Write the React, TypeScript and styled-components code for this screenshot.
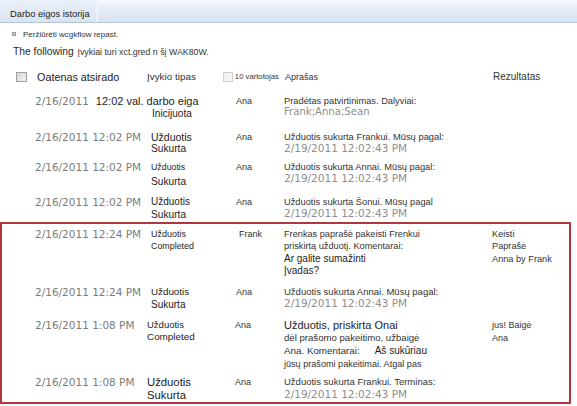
import React from 'react';
import styled, { createGlobalStyle } from 'styled-components';

type Tone = 'ink' | 'text' | 'date' | 'soft';
type Face = 'sans' | 'dv';

type Extra = { t: string; s: number; gap: number; tone?: Tone };
type LineData = { t: string; s: number; tone?: Tone; face?: Face; dy?: number; after?: Extra };
type RowData = {
  h: number;
  date: LineData[];
  type: LineData[];
  typeIndent: number;
  user: LineData[];
  userIndent: number;
  desc: LineData[];
  result: LineData[];
};

const colors: Record<Tone, string> = {
  ink: '#1d1d1d',
  text: '#333333',
  date: '#7b7b7b',
  soft: '#8e8e8e',
};

const faces: Record<Face, string> = {
  sans: '"Liberation Sans", Arial, sans-serif',
  dv: '"DejaVu Sans", Verdana, sans-serif',
};

const Global = createGlobalStyle`
  html, body { margin: 0; padding: 0; background: #ffffff; }
  body { font-family: "Liberation Sans", Arial, sans-serif; color: #333; }
`;

const Page = styled.div`
  width: 577px;
  height: 406px;
  overflow: hidden;
  background: #fff;
`;

const TitleBar = styled.div`
  height: 22px;
  border-bottom: 1px solid #b4c5dc;
  background: linear-gradient(#f6f9fd 0%, #e7eef8 30%, #d8e3f2 100%);
  display: flex;
`;

const TitleTab = styled.div`
  width: 98px;
  box-sizing: border-box;
  padding: 6px 0 0 10px;
  line-height: 16px;
  font-size: 9.3px;
  color: #1b1b1b;
  white-space: nowrap;
  background: linear-gradient(#eaf0f9 0%, #dae4f2 100%);
  border-right: 2px solid #eef3fa;
`;

const Toolbar = styled.div`
  margin-top: 5px;
  height: 12px;
  padding-left: 12px;
  display: flex;
  align-items: center;
  font-size: 8px;
  color: #333;
  white-space: nowrap;
`;

const Bullet = styled.span`
  width: 4px;
  height: 4px;
  box-sizing: border-box;
  border: 1px solid #9d9d9d;
  background: #c9c9c9;
  margin-right: 7px;
`;

const Intro = styled.div`
  margin-top: 5px;
  padding-left: 13px;
  line-height: 14px;
  height: 14px;
  font-size: 10.3px;
  color: #2a2a2a;
  white-space: nowrap;
`;

const IntroSmall = styled.span`
  font-size: 8.8px;
  margin-left: 1px;
  color: #333;
`;

const HeaderRow = styled.div`
  margin-top: 11px;
  height: 14px;
  display: grid;
  grid-template-columns: 35px 112px 137px 208px 1fr;
  align-items: center;
  white-space: nowrap;
`;

const HeadCell = styled.div<{ $s: number; $pad?: number; $tone?: Tone }>`
  display: flex;
  align-items: center;
  font-size: ${(p) => p.$s}px;
  padding-left: ${(p) => p.$pad ?? 0}px;
  color: ${(p) => colors[p.$tone ?? 'text']};
  line-height: 14px;
`;

const Check = styled.span<{ $faint?: boolean; $left: number }>`
  display: inline-block;
  width: ${(p) => (p.$faint ? 10 : 11)}px;
  height: 10px;
  box-sizing: border-box;
  margin-left: ${(p) => p.$left}px;
  border: 1px solid ${(p) => (p.$faint ? '#cfcfcf' : '#9e9e9e')};
  background: ${(p) =>
    p.$faint
      ? 'linear-gradient(135deg, #ececec, #fbfbfb)'
      : 'linear-gradient(135deg, #d6d6d6, #f4f4f4)'};
`;

const TinyLabel = styled.span`
  font-size: 7.7px;
  margin-left: 2px;
  color: #333;
`;

const List = styled.div`
  margin-top: 11px;
`;

const Row = styled.div<{ $h: number }>`
  display: grid;
  grid-template-columns: 112px 88px 49px 208px 1fr;
  padding-left: 35px;
  height: ${(p) => p.$h}px;
  align-items: start;
`;

const Cell = styled.div<{ $indent?: number }>`
  padding-left: ${(p) => p.$indent ?? 0}px;
  white-space: nowrap;
  min-width: 0;
`;

const Line = styled.div<{ $s: number; $tone: Tone; $face: Face; $dy: number }>`
  height: 12px;
  line-height: 12px;
  margin-top: ${(p) => p.$dy}px;
  font-size: ${(p) => p.$s}px;
  font-family: ${(p) => faces[p.$face]};
  color: ${(p) => colors[p.$tone]};
  white-space: nowrap;
`;

const After = styled.span<{ $s: number; $gap: number; $tone: Tone }>`
  font-family: ${faces.sans};
  font-size: ${(p) => p.$s}px;
  margin-left: ${(p) => p.$gap}px;
  color: ${(p) => colors[p.$tone]};
`;

const Highlight = styled.div`
  margin-right: 6px;
  padding: 6px 0 2px;
  box-shadow: inset 0 0 0 2px #b3353d;
`;

const D = (t: string, extra: Partial<LineData> = {}): LineData => ({ t, s: 10.5, tone: 'date', face: 'dv', ...extra });
const S = (t: string, extra: Partial<LineData> = {}): LineData => ({ t, s: 10.5, tone: 'soft', face: 'dv', ...extra });
const T = (t: string, s: number, extra: Partial<LineData> = {}): LineData => ({ t, s, tone: 'ink', ...extra });
const X = (t: string, s: number, extra: Partial<LineData> = {}): LineData => ({ t, s, tone: 'text', ...extra });

const upper: RowData[] = [
  {
    h: 36,
    date: [D('2/16/2011', { after: { t: '12:02 val. darbo eiga', s: 11, gap: 7, tone: 'ink' } })],
    type: [T('', 10), T('Inicijuota', 10.1, { dy: 1 })],
    typeIndent: 5,
    user: [X('Ana', 9)],
    userIndent: 1,
    desc: [X('Pradėtas patvirtinimas. Dalyviai:', 9.3), S('Frank;Anna;Sean', { s: 10.1, dy: -1 })],
    result: [],
  },
  {
    h: 30,
    date: [D('2/16/2011 12:02 PM')],
    type: [T('Užduotis', 10.5), T('Sukurta', 10.2, { dy: 0 })],
    typeIndent: 4,
    user: [X('Ana', 9)],
    userIndent: 1,
    desc: [X('Užduotis sukurta Frankui. Mūsų pagal:', 9.4), S('2/19/2011 12:02:43 PM', { dy: -1 })],
    result: [],
  },
  {
    h: 35,
    date: [D('2/16/2011 12:02 PM')],
    type: [T('Užduotis', 8.8), T('Sukurta', 10.2, { dy: 3 })],
    typeIndent: 4,
    user: [X('Ana', 9)],
    userIndent: 1,
    desc: [X('Užduotis sukurta Annai. Mūsų pagal:', 9.3), S('2/19/2011 12:02:43 PM', { dy: -1 })],
    result: [],
  },
  {
    h: 26,
    date: [D('2/16/2011 12:02 PM')],
    type: [T('Užduotis', 10), T('Sukurta', 10.2, { dy: 1 })],
    typeIndent: 4,
    user: [X('Ana', 9)],
    userIndent: 1,
    desc: [X('Užduotis sukurta Šonui. Mūsų pagal', 9.3), S('2/19/2011 12:02:43 PM', { dy: -1 })],
    result: [],
  },
];

const boxed: RowData[] = [
  {
    h: 58,
    date: [D('2/16/2011 12:24 PM')],
    type: [T('Užduotis', 9), T('Completed', 8.9)],
    typeIndent: 4,
    user: [X('Frank', 9)],
    userIndent: 4,
    desc: [
      X('Frenkas paprašė pakeisti Frenkui', 9.2),
      X('priskirtą užduotį. Komentarai:', 9.2),
      T('Ar galite sumažinti', 10, { dy: 1 }),
      T('Įvadas?', 10),
    ],
    result: [X('Keisti', 9.2), X('Paprašė', 9.2), X('Anna by Frank', 9.2, { dy: 1 })],
  },
  {
    h: 33,
    date: [D('2/16/2011 12:24 PM')],
    type: [T('Užduotis', 9.8), T('Sukurta', 10, { dy: 1 })],
    typeIndent: 4,
    user: [X('Ana', 9)],
    userIndent: 1,
    desc: [X('Užduotis sukurta Annai. Mūsų pagal:', 9.5), S('2/19/2011 12:02:43 PM', { dy: -1 })],
    result: [],
  },
  {
    h: 57,
    date: [D('2/16/2011 1:08 PM')],
    type: [T('Užduotis', 9.5), T('Completed', 9.9)],
    typeIndent: 0,
    user: [X('Ana', 9)],
    userIndent: 0,
    desc: [
      T('Užduotis, priskirta Onai', 11),
      X('dėl prašomo pakeitimo, užbaigė', 9.6, { dy: 1 }),
      X('Ana. Komentarai:', 9.8, { dy: 1, after: { t: 'Aš sukūriau', s: 10, gap: 15, tone: 'ink' } }),
      X('jūsų prašomi pakeitimai. Atgal pas', 9.1, { dy: 1 }),
    ],
    result: [X('jus! Baigė', 9), X('Ana', 9, { dy: 1 })],
  },
  {
    h: 26,
    date: [D('2/16/2011 1:08 PM')],
    type: [T('Užduotis', 11.3), T('Sukurta', 11.3, { dy: 1 })],
    typeIndent: 0,
    user: [X('Ana', 9)],
    userIndent: 0,
    desc: [X('Užduotis sukurta Frankui. Terminas:', 9.5), S('2/19/2011 12:02:43 PM')],
    result: [],
  },
];

const Lines: React.FC<{ lines: LineData[] }> = ({ lines }) => (
  <>
    {lines.map((l, i) => (
      <Line key={i} $s={l.s} $tone={l.tone ?? 'text'} $face={l.face ?? 'sans'} $dy={l.dy ?? 0}>
        {l.t}
        {l.after && (
          <After $s={l.after.s} $gap={l.after.gap} $tone={l.after.tone ?? 'text'}>
            {l.after.t}
          </After>
        )}
      </Line>
    ))}
  </>
);

const HistoryRow: React.FC<{ row: RowData }> = ({ row }) => (
  <Row $h={row.h}>
    <Cell>
      <Lines lines={row.date} />
    </Cell>
    <Cell $indent={row.typeIndent}>
      <Lines lines={row.type} />
    </Cell>
    <Cell $indent={row.userIndent}>
      <Lines lines={row.user} />
    </Cell>
    <Cell>
      <Lines lines={row.desc} />
    </Cell>
    <Cell>
      <Lines lines={row.result} />
    </Cell>
  </Row>
);

export default function App() {
  return (
    <Page>
      <Global />
      <TitleBar>
        <TitleTab>Darbo eigos istorija</TitleTab>
      </TitleBar>
      <Toolbar>
        <Bullet />
        Peržiūrėti wcgkflow repast.
      </Toolbar>
      <Intro>
        The following <IntroSmall>Įvykiai turi xct.gred n šį WAK80W.</IntroSmall>
      </Intro>
      <HeaderRow>
        <HeadCell $s={10}>
          <Check $left={16} />
        </HeadCell>
        <HeadCell $s={10.8} $pad={2} $tone="ink">
          Oatenas atsirado
        </HeadCell>
        <HeadCell $s={9.9}>
          Įvykio tipas
          <Check $faint $left={27} />
          <TinyLabel>10 vartotojas</TinyLabel>
        </HeadCell>
        <HeadCell $s={9} $pad={1}>
          Aprašas
        </HeadCell>
        <HeadCell $s={10} $pad={1}>
          Rezultatas
        </HeadCell>
      </HeaderRow>
      <List>
        {upper.map((r, i) => (
          <HistoryRow key={i} row={r} />
        ))}
        <Highlight>
          {boxed.map((r, i) => (
            <HistoryRow key={i} row={r} />
          ))}
        </Highlight>
      </List>
    </Page>
  );
}
